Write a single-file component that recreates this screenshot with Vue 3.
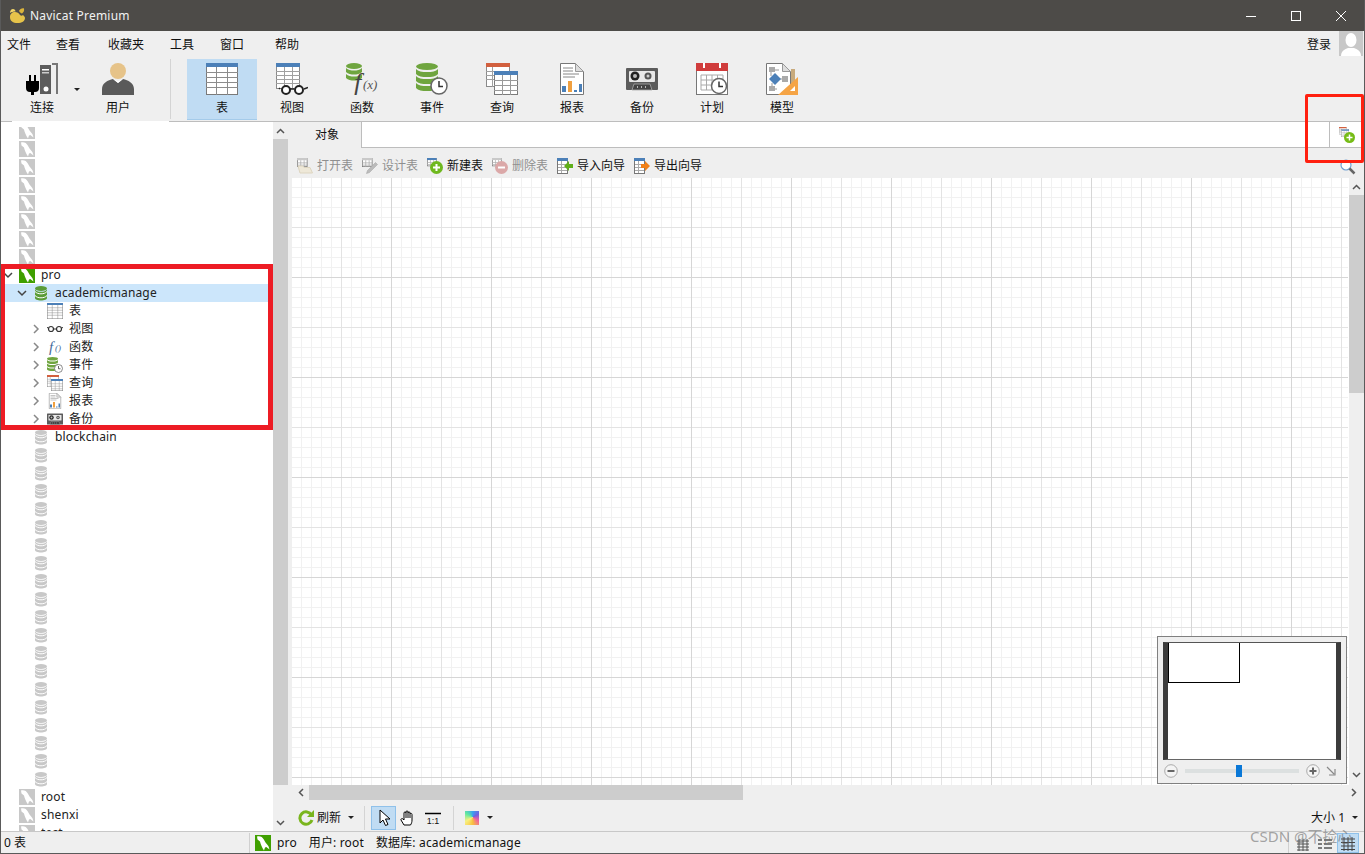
<template>
  <div class="window">
    <svg class="icon-defs" aria-hidden="true">
      <symbol id="seal" viewBox="0 0 16 16">
        <rect width="16" height="16" fill="currentColor" />
        <path d="M2 1.500c3-.8 5.500.5 6.800 3 1 2.200 2.500 4 4.700 6.800l1 3.200-3.200-2.500-1.300.5L9 15.500C7 12.500 5.500 9 5 6.500L2.500 4.500z" fill="#fff" />
      </symbol>
      <symbol id="db" viewBox="0 0 16 16">
        <ellipse cx="8" cy="3.500" rx="6" ry="2.500" fill="currentColor" />
        <path d="M2 4.500v8.500c0 1.500 2.700 2.500 6 2.500s6-1 6-2.500V4.500c-1 1.500-3 2.300-6 2.300S3 6 2 4.500z" fill="currentColor" />
        <path d="M2 6.500c1.500 1.700 3.500 2.300 6 2.300s4.500-.6 6-2.300M2 10.500c1.500 1.700 3.500 2.300 6 2.300s4.500-.6 6-2.300" fill="none" stroke="#fff" stroke-width="1" />
      </symbol>

      <symbol id="table" viewBox="0 0 32 32">
        <rect x=".5" y=".5" width="31" height="31" fill="#fff" stroke="#7a7a7a" />
        <rect width="32" height="4" fill="#4c80b8" />
        <path d="M0 9.500h32M0 14.500h32M0 19.500h32M0 24.500h32M10.500 4v28M21.500 4v28" stroke="#8c8c8c" />
      </symbol>
      <symbol id="view" viewBox="0 0 32 32">
        <rect x=".5" y=".5" width="23" height="25" fill="#fff" stroke="#8a8a8a" />
        <rect width="24" height="4" fill="#4c80b8" />
        <path d="M0 8.500h24M0 12.500h24M0 16.500h24M0 20.500h24M8.500 4v22M16.500 4v22" stroke="#a0a0a0" />
        <path d="M4 26l-1-1M28 26l4-1.500M14 26h4" stroke="#222" stroke-width="1.500" />
        <circle cx="10" cy="27" r="4" fill="#fff" stroke="#222" stroke-width="2" />
        <circle cx="23" cy="27" r="4" fill="#fff" stroke="#222" stroke-width="2" />
      </symbol>
      <symbol id="func" viewBox="0 0 32 32">
        <g fill="#6fa53f">
          <ellipse cx="8" cy="3" rx="8" ry="3" />
          <path d="M0 5c2 2 5 2.500 8 2.500S14 7 16 5v4c-2 2-5 2.500-8 2.500S2 11 0 9z" />
          <path d="M0 11c2 2 5 2.500 8 2.500S14 13 16 11v4c-2 2-5 2.500-8 2.500S2 17 0 15z" />
        </g>
        <text x="8" y="28" class="fx-big">f</text>
        <text x="17" y="26" class="fx-small">(x)</text>
      </symbol>
      <symbol id="event" viewBox="0 0 32 32">
        <g fill="#6fa53f">
          <ellipse cx="11" cy="3.500" rx="11" ry="3.500" />
          <path d="M0 6c2 2.500 6 3 11 3s9-.5 11-3v5c-2 2.500-6 3-11 3S2 13.500 0 11z" />
          <path d="M0 13c2 2.500 6 3 11 3s9-.5 11-3v5c-2 2.500-6 3-11 3S2 20.500 0 18z" />
          <path d="M0 20c2 2.500 6 3 11 3s9-.5 11-3v5c-2 2.500-6 3-11 3S2 27.500 0 25z" />
        </g>
        <circle cx="23" cy="23" r="8" fill="#fff" stroke="#666" stroke-width="1.500" />
        <path d="M23 18v5.500h4" fill="none" stroke="#333" stroke-width="1.500" />
      </symbol>
      <symbol id="query" viewBox="0 0 32 32">
        <rect x=".5" y=".5" width="23" height="23" fill="#fff" stroke="#8a8a8a" />
        <rect width="24" height="4" fill="#d2603f" />
        <path d="M0 8.500h8M0 12.500h8M0 16.500h8M6.500 4v20" stroke="#a0a0a0" />
        <rect x="8.500" y="8.500" width="23" height="23" fill="#fff" stroke="#7a7a7a" />
        <rect x="8" y="8" width="24" height="4" fill="#4c80b8" />
        <path d="M8 17.500h24M8 22.500h24M8 27.500h24M16.500 12v20M24.500 12v20" stroke="#999" />
      </symbol>
      <symbol id="report" viewBox="0 0 32 32">
        <path d="M4.500.5h15l8 8v23h-23z" fill="#fff" stroke="#777" />
        <path d="M19.500.5v8h8z" fill="#ddd" stroke="#999" />
        <path d="M7 5h10M7 8h10M7 11h16M7 14h12" stroke="#888" />
        <rect x="6" y="23" width="4" height="6" fill="#4c80b8" />
        <rect x="12" y="18" width="4" height="11" fill="#f0a040" />
        <rect x="18" y="27" width="3" height="2" fill="#4c80b8" />
        <rect x="23" y="21" width="3" height="8" fill="#4c80b8" />
      </symbol>
      <symbol id="backup" viewBox="0 0 32 32">
        <path d="M1 5h30a1 1 0 0 1 1 1v20a1 1 0 0 1-1 1H1a1 1 0 0 1-1-1V6a1 1 0 0 1 1-1z" fill="#5c5c5c" />
        <rect x="3" y="8" width="26" height="11" rx="1" fill="#e8e8e8" />
        <circle cx="9" cy="13" r="4.500" fill="#222" />
        <circle cx="9" cy="13" r="2" fill="#bbb" />
        <circle cx="22" cy="13" r="3.500" fill="#555" />
        <circle cx="22" cy="13" r="1.500" fill="#ccc" />
        <path d="M6 27l2-6h16l2 6z" fill="#444" stroke="#aaa" stroke-width=".8" />
        <path d="M11 24h1M15 24h1M19 24h1" stroke="#ddd" stroke-width="1.500" />
      </symbol>
      <symbol id="plan" viewBox="0 0 32 32">
        <rect x=".5" y=".5" width="31" height="31" fill="#fff" stroke="#777" />
        <rect width="32" height="8" fill="#d03c3c" />
        <path d="M8 0v5M24 0v5" stroke="#fff" stroke-width="2" />
        <path d="M5 12h22v15H5zM5 17h22M5 22h22M10.500 12v15M16 12v15M21.500 12v15" fill="none" stroke="#aaa" />
        <circle cx="23" cy="23" r="7.500" fill="#fff" stroke="#666" stroke-width="1.500" />
        <path d="M23 18.500v5h4" fill="none" stroke="#333" stroke-width="1.500" />
      </symbol>
      <symbol id="model" viewBox="0 0 32 32">
        <path d="M.5.500h16l8 8v23H.5z" fill="#fff" stroke="#777" />
        <path d="M16.500.5v8h8z" fill="#ddd" stroke="#999" />
        <path d="M13 7h-8v6M10 16h9M6 20v6h5" fill="none" stroke="#999" />
        <rect x="3" y="4" width="6" height="5" fill="#aaa" />
        <rect x="16" y="13" width="6" height="6" fill="#aaa" />
        <rect x="3" y="23" width="6" height="5" fill="#aaa" />
        <path d="M9 10l6 6-6 6-6-6z" fill="#4c80b8" />
        <rect x="25" y="6" width="4" height="16" fill="#c8aa7c" />
        <path d="M32 14v18H12z" fill="#f5a445" />
        <path d="M29 23v5h-5z" fill="#fff" />
      </symbol>

      <symbol id="glasses" viewBox="0 0 16 16">
        <circle cx="4" cy="8" r="2.500" fill="#fff" stroke="#333" stroke-width="1.200" />
        <circle cx="12" cy="8" r="2.500" fill="#fff" stroke="#333" stroke-width="1.200" />
        <path d="M6.500 8h3M1.500 7L0 6.500M14.500 7l1.500-.5" stroke="#333" />
      </symbol>
      <symbol id="func-small" viewBox="0 0 16 16">
        <text x="2" y="13" class="fx-tree">f</text>
        <text x="8" y="12" class="fx-tree-b">()</text>
      </symbol>

      <symbol id="mini-table" viewBox="0 0 16 16">
        <rect x=".5" y=".5" width="13" height="11" fill="#fff" stroke="#777" />
        <rect width="14" height="3" fill="currentColor" />
        <path d="M0 6.500h14M0 9.500h14M5 3v9M9.500 3v9" stroke="#aaa" />
      </symbol>
      <symbol id="tb-open" viewBox="0 0 16 16">
        <use href="#mini-table" width="12" height="12" style="color: #c9c9c9" />
        <path d="M1 8h5l1 1.500h6L15.500 15H3z" fill="#eee8d8" stroke="#ddd5c0" />
      </symbol>
      <symbol id="tb-design" viewBox="0 0 16 16">
        <use href="#mini-table" width="12" height="12" style="color: #c9c9c9" />
        <path d="M13.500 4.500l2 2-8 8-3 1 1-3z" fill="#bbb" stroke="#aaa" stroke-width=".6" />
      </symbol>
      <symbol id="tb-new" viewBox="0 0 16 16">
        <use href="#mini-table" width="11" height="11" style="color: #4c80b8" />
        <circle cx="9.500" cy="9.500" r="6.500" fill="#6fb81e" />
        <path d="M9.500 6v7M6 9.500h7" stroke="#fff" stroke-width="2" />
      </symbol>
      <symbol id="tb-delete" viewBox="0 0 16 16">
        <use href="#mini-table" width="11" height="11" style="color: #c9c9c9" />
        <circle cx="9.500" cy="9.500" r="6.500" fill="#dba8a8" />
        <path d="M6 9.500h7" stroke="#fff" stroke-width="2" />
      </symbol>
      <symbol id="tb-import" viewBox="0 0 16 16">
        <rect x=".5" y=".5" width="10" height="15" fill="#fff" stroke="#777" />
        <rect width="11" height="3" fill="#4c80b8" />
        <path d="M1 6.500h9M1 9.500h9M1 12.500h9M4.500 3v12" stroke="#aaa" />
        <path d="M16 6h-4V3L7 8l5 5v-3h4z" fill="#5fae1a" />
      </symbol>
      <symbol id="tb-export" viewBox="0 0 16 16">
        <rect x=".5" y=".5" width="10" height="15" fill="#fff" stroke="#777" />
        <rect width="11" height="3" fill="#4c80b8" />
        <path d="M1 6.500h9M1 9.500h9M1 12.500h9M4.500 3v12" stroke="#aaa" />
        <path d="M7 6h4V3l5 5-5 5v-3H7z" fill="#f08018" />
      </symbol>
    </svg>

    <header class="titlebar">
      <svg class="logo" width="17" height="15" viewBox="0 0 17 15">
        <path d="M1 9c0-3 2-5 5-5 2 0 4 1 5 3 1 1 2 1 3 0 1 1 2 2 2 3 0 3-3 5-7.500 5S1 13 1 9z" fill="#e6c34a" />
        <path d="M1 5c0-2 1-4 3-4 1.500 0 2.500 1 2.500 2.500C4 3.500 2.500 4 1 5z" fill="#f0d468" />
        <path d="M10 3c1-2 3-3 5-2.500.5 2-.5 4-2 5-1 0-2-1-3-2.500z" fill="#dcb53c" />
      </svg>
      <span class="title-text">Navicat Premium</span>
      <div class="window-controls">
        <svg width="12" height="12" viewBox="0 0 12 12"><path d="M1 6.500h10" stroke="#fff" /></svg>
        <svg width="12" height="12" viewBox="0 0 12 12"><rect x="1.500" y="1.500" width="9" height="9" fill="none" stroke="#fff" /></svg>
        <svg width="12" height="12" viewBox="0 0 12 12"><path d="M1 1l10 10M11 1L1 11" stroke="#fff" /></svg>
      </div>
    </header>

    <nav class="menubar">
      <span v-for="item in menuItems" :key="item" class="menu-item">{{ item }}</span>
      <span class="login">登录</span>
      <span class="avatar">
        <svg width="24" height="25" viewBox="0 0 24 25">
          <ellipse cx="12" cy="9" rx="5.500" ry="7" fill="#fff" />
          <path d="M2 25c0-5 4-7 7-8h6c3 1 7 3 7 8z" fill="#fff" />
        </svg>
      </span>
    </nav>

    <div class="toolbar">
      <div class="tool">
        <svg class="tool-icon" viewBox="0 0 32 32">
          <rect x="14" y="2" width="11" height="29" fill="#5c5c5c" />
          <path d="M26 0h6v31h-2V2h-4z" fill="#777" />
          <rect x="16" y="6" width="7" height="1.500" fill="#fff" />
          <rect x="16" y="9" width="7" height="1.500" fill="#ccc" />
          <circle cx="20" cy="26" r="2.500" fill="#fff" />
          <path d="M3 12v6H0v7a4 4 0 0 0 4 4h1v3h3v-3h1a4 4 0 0 0 4-4v-7h-3v-6H8v6H5v-6z" fill="#000" />
        </svg>
        <span class="tool-label">连接</span>
        <i class="caret connect-caret"></i>
      </div>
      <div class="tool">
        <svg class="tool-icon" viewBox="0 0 32 32">
          <circle cx="16" cy="8" r="8" fill="#e6c389" />
          <path d="M0 32v-6c0-6 6-9 11-10l5 4 5-4c5 1 11 4 11 10v6z" fill="#5a5a5a" />
          <path d="M11 16l5 4 5-4-5 2z" fill="#fff" />
        </svg>
        <span class="tool-label">用户</span>
      </div>
      <div class="toolbar-sep"></div>
      <div v-for="tool in tools" :key="tool.label" class="tool" :class="{ active: tool.active }">
        <svg class="tool-icon"><use :href="'#' + tool.icon" /></svg>
        <span class="tool-label">{{ tool.label }}</span>
      </div>
    </div>

    <div class="content">
      <aside class="tree">
        <div
          v-for="(row, i) in treeRows"
          :key="i"
          class="tree-row"
          :class="['depth-' + row.depth, { selected: row.selected }]"
        >
          <span class="chevron">
            <svg v-if="row.arrow" width="10" height="10" viewBox="0 0 10 10">
              <path
                :d="row.arrow === 'down' ? 'M1 3l4 4 4-4' : 'M3 1l4 4-4 4'"
                fill="none"
                :stroke="row.arrow === 'down' ? '#444' : '#888'"
                stroke-width="1.500"
              />
            </svg>
          </span>
          <span class="tree-icon" :class="[row.tint, { clipped: i === 0 }]">
            <svg width="16" height="16"><use :href="'#' + row.icon" /></svg>
          </span>
          <span class="tree-label">{{ row.label }}</span>
        </div>
      </aside>
      <div class="scrollbar-v tree-scroll">
        <span class="arrow"><svg width="9" height="6" viewBox="0 0 9 6"><path d="M1 5l3.500-3.500L8 5" fill="none" stroke="#555" stroke-width="1.500" /></svg></span>
        <span class="thumb tree-thumb"></span>
        <span class="track"></span>
        <span class="arrow"><svg width="9" height="6" viewBox="0 0 9 6"><path d="M1 1l3.500 3.500L8 1" fill="none" stroke="#555" stroke-width="1.500" /></svg></span>
      </div>

      <main class="main">
        <div class="tabbar">
          <div class="tab">对象</div>
          <div class="tab-fill"></div>
          <div class="tab-add">
            <svg width="16" height="16" viewBox="0 0 16 16">
              <use href="#query" width="10" height="10" />
              <circle cx="10.500" cy="10.500" r="5.500" fill="#76bc16" />
              <path d="M10.500 7.500v6M7.500 10.500h6" stroke="#fff" stroke-width="1.500" />
            </svg>
          </div>
        </div>

        <div class="objectbar">
          <div v-for="action in actions" :key="action.label" class="action" :class="{ disabled: action.disabled }">
            <svg width="16" height="16"><use :href="'#' + action.icon" /></svg>
            <span>{{ action.label }}</span>
          </div>
          <svg class="search" width="16" height="16" viewBox="0 0 16 16">
            <circle cx="6" cy="6" r="5" fill="#fff" stroke="#6f9fd0" stroke-width="1.200" />
            <path d="M9.500 9.500l5 5" stroke="#666" stroke-width="2.500" />
          </svg>
        </div>

        <div class="canvas-area">
          <div class="canvas-wrap">
            <div class="canvas"></div>
            <div class="minimap">
              <div class="mini-view">
                <div class="mini-frame"></div>
              </div>
              <div class="mini-controls">
                <svg width="14" height="14" viewBox="0 0 14 14">
                  <circle cx="7" cy="7" r="6.300" fill="#f4f4f4" stroke="#aaa" />
                  <path d="M3.500 7h7" stroke="#666" stroke-width="2" />
                </svg>
                <div class="mini-slider"><span class="mini-knob"></span></div>
                <svg width="14" height="14" viewBox="0 0 14 14">
                  <circle cx="7" cy="7" r="6.300" fill="#f4f4f4" stroke="#aaa" />
                  <path d="M3.500 7h7M7 3.500v7" stroke="#666" stroke-width="2" />
                </svg>
                <svg class="mini-fit" width="10" height="10" viewBox="0 0 10 10">
                  <path d="M1 1l7 7M9 3v6H3" fill="none" stroke="#888" stroke-width="1.200" />
                </svg>
              </div>
            </div>
          </div>
          <div class="scrollbar-v canvas-scroll">
            <span class="arrow arrow-first"><svg width="9" height="6" viewBox="0 0 9 6"><path d="M1 5l3.500-3.500L8 5" fill="none" stroke="#555" stroke-width="1.500" /></svg></span>
            <span class="thumb canvas-thumb"></span>
            <span class="track"></span>
            <span class="arrow arrow-last"><svg width="9" height="6" viewBox="0 0 9 6"><path d="M1 1l3.500 3.500L8 1" fill="none" stroke="#555" stroke-width="1.500" /></svg></span>
          </div>
          <div class="scrollbar-h">
            <span class="arrow-h"><svg width="6" height="9" viewBox="0 0 6 9"><path d="M5 1L1.500 4.500 5 8" fill="none" stroke="#555" stroke-width="1.500" /></svg></span>
            <span class="thumb h-thumb"></span>
            <span class="track"></span>
            <span class="arrow-h"><svg width="6" height="9" viewBox="0 0 6 9"><path d="M1 1l3.500 3.500L1 8" fill="none" stroke="#555" stroke-width="1.500" /></svg></span>
          </div>
        </div>

        <div class="bottombar">
          <svg class="refresh" width="16" height="16" viewBox="0 0 16 16">
            <path d="M13.500 5A6.200 6.200 0 1 0 14 10" fill="none" stroke="#7ab51d" stroke-width="3" />
            <path d="M9 7h7V0z" fill="#7ab51d" />
          </svg>
          <span class="refresh-label">刷新</span>
          <i class="caret refresh-caret"></i>
          <span class="bar-sep first-sep"></span>
          <span class="cursor-btn">
            <svg width="16" height="18" viewBox="0 0 16 18">
              <path d="M4 1v13l3-3 2.500 5.500 2.500-1L9.500 10H14z" fill="#fff" stroke="#000" />
            </svg>
          </span>
          <svg class="hand" width="16" height="16" viewBox="0 0 16 16">
            <path d="M4 15l-3-5c-.5-1 1-2 2-1l1 1V3c0-1.500 2-1.500 2 0V2c0-1.500 2-1.500 2 0v1c0-1.500 2-1.500 2 0v1c0-1 2-1 2 .5V10c0 2-.5 3.500-1.500 5z" fill="#fff" stroke="#000" />
            <path d="M6 3v5M8 3v5M10 4v4" stroke="#000" />
          </svg>
          <svg class="ratio" width="16" height="14" viewBox="0 0 16 14">
            <path d="M0 2.500h16" stroke="#000" stroke-width="1.500" />
            <text x="8" y="13" class="ratio-text">1:1</text>
          </svg>
          <span class="bar-sep second-sep"></span>
          <span class="swatch"></span>
          <i class="caret swatch-caret"></i>
          <span class="size-label">大小 1</span>
          <i class="caret size-caret"></i>
        </div>
      </main>
    </div>

    <footer class="statusbar">
      <span class="status-count">0 表</span>
      <span class="status-sep"></span>
      <svg class="status-seal" width="16" height="16"><use href="#seal" /></svg>
      <span class="status-conn">pro</span>
      <span class="status-user">用户: root</span>
      <span class="status-db">数据库: academicmanage</span>
      <div class="status-views">
        <svg width="20" height="18" viewBox="0 0 20 18">
          <path d="M4 7h12M4 10h12M4 13h12M4 16h12M6 5v12M10 5v12M14 5v12" stroke="#555" />
        </svg>
        <svg width="20" height="18" viewBox="0 0 20 18">
          <path d="M3 6h4M9 6h8M3 10h4M9 10h8M3 14h4M9 14h8" stroke="#555" stroke-width="1.500" />
        </svg>
        <span class="view-active">
          <svg width="20" height="18" viewBox="0 0 20 18">
            <path d="M3 5h14M3 8.500h14M3 12h14M3 15.500h14M6 3v14M10 3v14M14 3v14" stroke="#444" />
          </svg>
        </span>
      </div>
    </footer>

    <div class="mark mark-tree"></div>
    <div class="mark mark-add"></div>
    <span class="watermark">CSDN @不捡心</span>
  </div>
</template>

<script setup>
const menuItems = ['文件', '查看', '收藏夹', '工具', '窗口', '帮助']

const tools = [
  { label: '表', icon: 'table', active: true },
  { label: '视图', icon: 'view' },
  { label: '函数', icon: 'func' },
  { label: '事件', icon: 'event' },
  { label: '查询', icon: 'query' },
  { label: '报表', icon: 'report' },
  { label: '备份', icon: 'backup' },
  { label: '计划', icon: 'plan' },
  { label: '模型', icon: 'model' },
]

const actions = [
  { label: '打开表', icon: 'tb-open', disabled: true },
  { label: '设计表', icon: 'tb-design', disabled: true },
  { label: '新建表', icon: 'tb-new' },
  { label: '删除表', icon: 'tb-delete', disabled: true },
  { label: '导入向导', icon: 'tb-import' },
  { label: '导出向导', icon: 'tb-export' },
]

const grayConn = (label = '') => ({ depth: 0, icon: 'seal', tint: 'gray', label })
const grayDb = (label = '') => ({ depth: 1, icon: 'db', tint: 'gray', label })
const child = (icon, label, arrow = 'right') => ({ depth: 2, icon, label, arrow })

const treeRows = [
  ...Array.from({ length: 8 }, () => grayConn()),
  { depth: 0, icon: 'seal', tint: 'green', label: 'pro', arrow: 'down' },
  { depth: 1, icon: 'db', tint: 'green', label: 'academicmanage', arrow: 'down', selected: true },
  child('table', '表', null),
  child('glasses', '视图'),
  child('func-small', '函数'),
  child('event', '事件'),
  child('query', '查询'),
  child('report', '报表'),
  child('backup', '备份'),
  grayDb('blockchain'),
  ...Array.from({ length: 19 }, () => grayDb()),
  grayConn('root'),
  grayConn('shenxi'),
  grayConn('test'),
]
</script>

<style>
html,
body {
  margin: 0;
  background: #efefef;
}
</style>

<style scoped>
.window {
  position: relative;
  box-sizing: border-box;
  width: 1365px;
  height: 854px;
  display: flex;
  flex-direction: column;
  overflow: hidden;
  background: #efefef;
  border-left: 1px solid #5a5a5a;
  border-right: 1px solid #5a5a5a;
  border-bottom: 1px solid #5a5a5a;
  color: #111;
  font: 12px/16px "Noto Sans", "Noto Sans CJK SC", sans-serif;
}

.icon-defs {
  position: absolute;
  width: 0;
  height: 0;
}

.fx-big {
  font: italic 26px "Liberation Serif", serif;
  fill: #444;
}

.fx-small {
  font: italic 13px "Liberation Serif", serif;
  fill: #555;
}

.fx-tree {
  font: italic 15px "Liberation Serif", serif;
  fill: #456a9a;
}

.fx-tree-b {
  font: italic 9px "Liberation Serif", serif;
  fill: #456a9a;
}

.ratio-text {
  font: 9px "Liberation Sans", sans-serif;
  text-anchor: middle;
  fill: #111;
}

.titlebar {
  display: flex;
  align-items: center;
  height: 31px;
  margin: 0 -1px;
  padding-left: 9px;
  background: #4d4b48;
  color: #f2f2f2;
  flex: none;
}

.logo {
  margin-right: 4px;
}

.title-text {
  font-size: 12px;
  letter-spacing: 0.2px;
}

.window-controls {
  display: flex;
  margin-left: auto;
  margin-right: 18px;
  gap: 33px;
}

.menubar {
  display: flex;
  align-items: center;
  height: 27px;
  padding-left: 6px;
  gap: 26px;
  flex: none;
}

.menu-item:nth-child(2) {
  margin-left: -1px;
}

.menu-item:nth-child(3) {
  margin-left: 2px;
}

.menu-item:nth-child(6) {
  margin-left: 5px;
}

.login {
  margin-left: auto;
  margin-right: -18px;
}

.avatar {
  display: flex;
  align-self: flex-start;
  width: 24px;
  height: 25px;
  margin-right: 1px;
  background: #c8c8c8;
}

.toolbar {
  position: relative;
  display: flex;
  box-sizing: border-box;
  height: 64px;
  padding: 1px 0 0 6px;
  border-bottom: 1px solid #bdbdbd;
  flex: none;
}

.toolbar::after {
  content: "";
  position: absolute;
  left: 11px;
  bottom: -1px;
  width: 157px;
  height: 1px;
  background: #fff;
}

.tool {
  position: relative;
  display: flex;
  flex-direction: column;
  align-items: center;
  box-sizing: border-box;
  width: 70px;
  height: 61px;
  padding-top: 4px;
}

.tool:nth-child(2) {
  margin-left: 6px;
}

.tool.active {
  background: #c0dcf3;
  border-bottom: 1px solid #a4cbea;
}

.tool-icon {
  width: 32px;
  height: 32px;
}

.tool-label {
  margin-top: 5px;
}

.toolbar-sep {
  width: 1px;
  height: 60px;
  margin: 0 16px 0 17px;
  background: #d4d4d4;
}

.caret {
  display: inline-block;
  width: 0;
  height: 0;
  border-left: 3px solid transparent;
  border-right: 3px solid transparent;
  border-top: 3px solid #222;
}

.connect-caret {
  position: absolute;
  right: -3px;
  top: 29px;
}

.content {
  display: flex;
  flex: 1;
  min-height: 0;
}

.tree {
  width: 272px;
  flex: none;
  overflow: hidden;
  background: #fff;
}

.tree-row {
  display: flex;
  align-items: center;
  height: 18px;
  color: #222;
}

.tree-row.selected {
  background: #cce6fb;
}

.tree-label {
  letter-spacing: 0.15px;
}

.depth-0 {
  padding-left: 4px;
}

.depth-1 {
  padding-left: 18px;
}

.depth-2 {
  padding-left: 32px;
}

.chevron {
  display: flex;
  align-items: center;
  width: 14px;
  height: 18px;
}

.chevron svg {
  margin-left: -2px;
}

.tree-icon {
  display: flex;
  align-items: flex-end;
  width: 16px;
  height: 16px;
  margin-right: 6px;
}

.tree-icon.clipped {
  height: 12px;
  margin-top: 4px;
  overflow: hidden;
}

.tree-icon.gray {
  color: #c8c8c8;
}

.tree-icon.green {
  color: #3f9f00;
}

.depth-1 .tree-icon.green {
  color: #5a9c38;
}

.scrollbar-v {
  display: flex;
  flex-direction: column;
  width: 15px;
  flex: none;
}

.arrow {
  display: flex;
  align-items: center;
  justify-content: center;
  height: 17px;
  flex: none;
}

.thumb {
  display: block;
  background: #cdcdcd;
  flex: none;
}

.track {
  flex: 1;
}

.tree-thumb {
  height: 646px;
}

.main {
  display: flex;
  flex: 1;
  flex-direction: column;
  min-width: 0;
}

.tabbar {
  display: flex;
  box-sizing: border-box;
  height: 26px;
  flex: none;
}

.tab {
  width: 74px;
  padding-left: 27px;
  box-sizing: border-box;
  border-right: 1px solid #bdbdbd;
  line-height: 26px;
}

.tab-fill {
  flex: 1;
  background: #fff;
  border-bottom: 1px solid #bdbdbd;
}

.tab-add {
  display: flex;
  align-items: center;
  justify-content: center;
  box-sizing: border-box;
  width: 35px;
  background: #fff;
  border-left: 1px solid #bdbdbd;
  border-bottom: 1px solid #bdbdbd;
}

.objectbar {
  display: flex;
  align-items: center;
  box-sizing: border-box;
  height: 30px;
  padding: 5px 8px 0 9px;
  gap: 9px;
  flex: none;
}

.action {
  display: flex;
  align-items: center;
  gap: 4px;
}

.action.disabled {
  color: #8f8f8f;
}

.search {
  margin-left: auto;
  margin-top: 2px;
}

.canvas-area {
  display: grid;
  grid-template-columns: 1fr 15px;
  grid-template-rows: 1fr 15px;
  flex: 1;
  min-height: 0;
  padding-left: 4px;
}

.canvas-wrap {
  position: relative;
  min-height: 0;
  background: #fff;
  padding-right: 1px;
}

.canvas {
  height: 100%;
  background-color: #fff;
  background-image:
    repeating-linear-gradient(to right, transparent 0 99px, #d6d6d6 99px 100px),
    repeating-linear-gradient(to bottom, transparent 0 99px, #d6d6d6 99px 100px),
    repeating-linear-gradient(to right, transparent 0 49px, #e3e3e3 49px 50px),
    repeating-linear-gradient(to bottom, transparent 0 49px, #e3e3e3 49px 50px),
    repeating-linear-gradient(to right, transparent 0 9px, #f1f1f1 9px 10px),
    repeating-linear-gradient(to bottom, transparent 0 9px, #f1f1f1 9px 10px);
}

.minimap {
  position: absolute;
  right: 2px;
  bottom: 1px;
  box-sizing: border-box;
  width: 190px;
  height: 148px;
  padding: 5px;
  background: #efefef;
  border: 1px solid #808080;
}

.mini-view {
  box-sizing: border-box;
  height: 118px;
  background: #fff;
  border-left: 5px solid #3c3c3c;
  border-right: 5px solid #3c3c3c;
  border-bottom: 1px solid #666;
  border-top: 1px solid #555;
}

.mini-frame {
  box-sizing: border-box;
  width: 72px;
  height: 40px;
  border: 1px solid #000;
  border-top: 0;
}

.mini-controls {
  display: flex;
  align-items: center;
  height: 14px;
  margin-top: 4px;
  padding-left: 1px;
}

.mini-slider {
  display: flex;
  align-items: center;
  width: 114px;
  height: 4px;
  margin: 0 7px;
  background: #dce0e0;
}

.mini-knob {
  width: 6px;
  height: 12px;
  margin-left: 51px;
  background: #0a78d7;
}

.mini-fit {
  margin-left: 6px;
}

.canvas-scroll .arrow-first {
  height: 17px;
}

.canvas-thumb {
  height: 198px;
}

.canvas-scroll .arrow-last {
  height: 20px;
}

.scrollbar-h {
  display: flex;
  grid-column: 1 / 3;
  margin-right: 2px;
}

.arrow-h {
  display: flex;
  align-items: center;
  justify-content: center;
  width: 17px;
  flex: none;
}

.h-thumb {
  width: 434px;
}

.bottombar {
  display: flex;
  align-items: center;
  height: 31px;
  padding: 4px 6px 0 10px;
  box-sizing: border-box;
  flex: none;
}

.refresh-label {
  margin-left: 3px;
}

.refresh-caret {
  margin-left: 7px;
}

.bar-sep {
  width: 1px;
  height: 24px;
  background: #d4d4d4;
}

.first-sep {
  margin-left: 10px;
}

.cursor-btn {
  display: flex;
  align-items: center;
  justify-content: center;
  box-sizing: border-box;
  width: 25px;
  height: 24px;
  margin-left: 6px;
  background: #c0dcf3;
  border: 1px solid #8fc1ea;
}

.hand {
  margin-left: 4px;
}

.ratio {
  margin-left: 9px;
}

.second-sep {
  margin-left: 12px;
}

.swatch {
  width: 14px;
  height: 14px;
  margin-left: 11px;
  background: conic-gradient(from 0deg at 55% 45%, #3aa0f0, #7060e0, #f060a0, #f8c040, #f8f080, #60e8a0, #3aa0f0);
}

.swatch-caret {
  margin-left: 8px;
}

.size-label {
  margin-left: auto;
}

.size-caret {
  margin-left: 7px;
}

.statusbar {
  position: relative;
  display: flex;
  align-items: center;
  box-sizing: border-box;
  height: 22px;
  border-top: 1px solid #c8c8c8;
  padding-left: 3px;
  flex: none;
}

.status-count {
  width: 245px;
}

.status-sep {
  width: 1px;
  height: 20px;
  background: #d0d0d0;
  margin-right: 5px;
}

.status-seal {
  color: #3f9f00;
}

.status-conn {
  margin-left: 6px;
  letter-spacing: 0.15px;
}

.status-user {
  margin-left: 12px;
  letter-spacing: 0.15px;
}

.status-db {
  margin-left: 12px;
  letter-spacing: 0.15px;
}

.status-views {
  display: flex;
  align-items: center;
  gap: 2px;
  margin-left: auto;
  margin-right: 5px;
  padding-left: 4px;
  border-left: 1px solid #d0d0d0;
}

.view-active {
  display: flex;
  background: #c0dcf3;
  border: 1px solid #8fc1ea;
}

.mark {
  position: absolute;
  box-sizing: border-box;
  pointer-events: none;
}

.mark-tree {
  left: -1px;
  top: 264px;
  width: 273px;
  height: 166px;
  border: 5px solid #ed1c24;
}

.mark-add {
  left: 1304px;
  top: 94px;
  width: 59px;
  height: 69px;
  border: 3px solid #ff2010;
  border-radius: 2px;
}

.watermark {
  position: absolute;
  left: 1249px;
  top: 828px;
  font-size: 15px;
  color: rgba(110, 110, 110, 0.6);
  pointer-events: none;
}
</style>
